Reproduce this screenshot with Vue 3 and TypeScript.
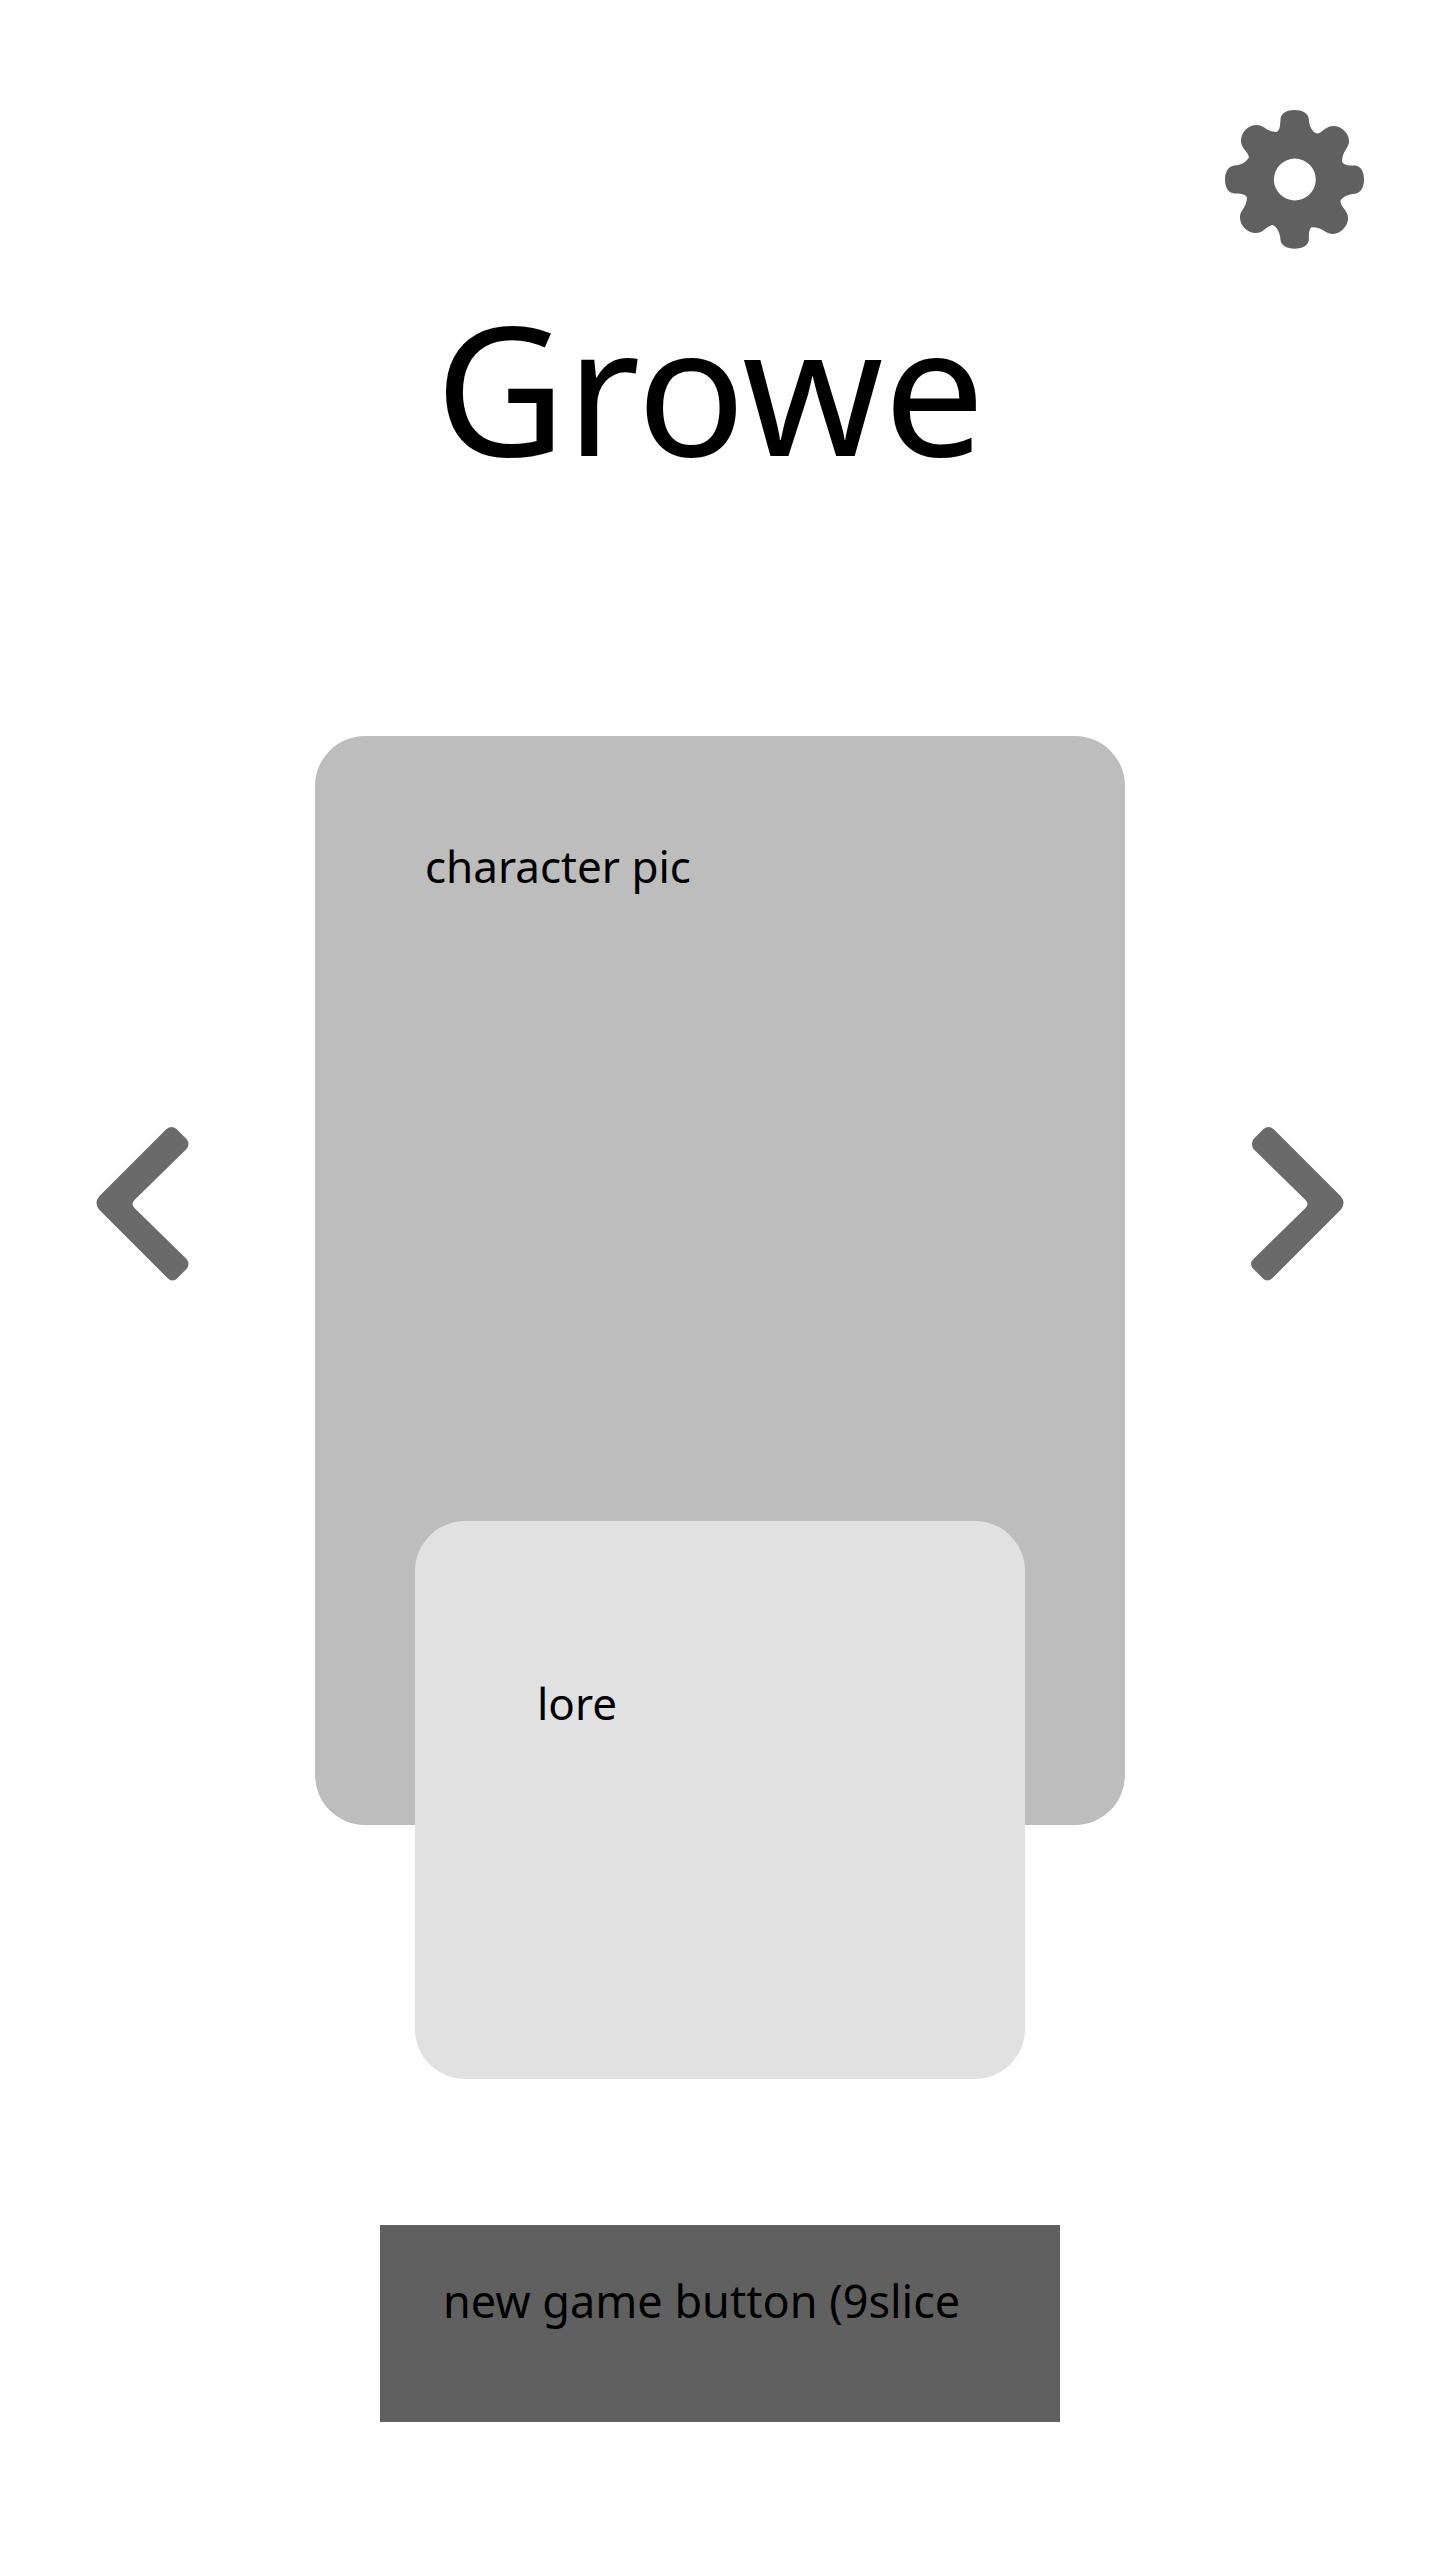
<script setup lang="ts">
import { ref } from 'vue'

interface Character {
  picture: string
  lore: string
}

const title = 'Growe'
const characters: Character[] = [{ picture: 'character pic', lore: 'lore' }]
const current = ref(0)

function step(delta: number): void {
  current.value = (current.value + delta + characters.length) % characters.length
}
</script>

<template>
  <main class="screen">
    <header class="top">
      <button class="icon-button" type="button" aria-label="Settings">
        <svg class="gear" viewBox="45 45 418 418" aria-hidden="true">
          <path
            fill-rule="evenodd"
            d="M212 72C214 54 232 45 254 45C277 45 295 54 297 72C298 94 308 111 321 116C336 116 346 93 371 93C396 93 418 115 418 139C418 160 397 168 397 201C406 213 421 211 437 212C454 214 463 232 463 254C463 277 453 295 436 297C415 298 398 307 392 318C393 339 415 346 415 370C415 396 392 418 367 418C345 417 338 396 304 398C296 407 298 421 297 436C295 453 277 462 254 462C232 462 214 453 212 436C211 415 201 396 188 391C168 393 161 415 138 415C112 415 90 393 90 367C90 347 111 339 111 307C104 296 88 297 73 296C55 295 45 277 45 254C45 232 55 214 73 212C93 211 111 200 117 187C115 170 93 160 93 138C93 112 114 90 140 90C163 90 167 110 201 111C211 104 211 88 212 72ZM255 191A63 63 0 1 0 255 317A63 63 0 1 0 255 191Z"
          />
        </svg>
      </button>
    </header>

    <h1 class="title">{{ title }}</h1>

    <section class="picker" aria-label="Character">
      <button class="icon-button arrow" type="button" aria-label="Previous character" @click="step(-1)">
        <svg class="chevron" viewBox="0 0 92 154" aria-hidden="true">
          <path d="M70 2Q75 -2 80 2L90 12Q94 17 90 22L38 73Q34 77 38 81L90 132Q94 137 90 142L81 151Q76 156 71 151L3 83Q-3 76 3 69Z" />
        </svg>
      </button>

      <div class="stack">
        <article class="card picture">{{ characters[current].picture }}</article>
        <article class="card lore">{{ characters[current].lore }}</article>
      </div>

      <button class="icon-button arrow" type="button" aria-label="Next character" @click="step(1)">
        <svg class="chevron" viewBox="0 0 92 154" aria-hidden="true">
          <path d="M22 2Q17 -2 12 2L2 12Q-1 17 2 22L54 73Q58 77 54 81L2 132Q-3 137 2 142L11 151Q16 156 21 151L89 83Q95 76 89 69Z" />
        </svg>
      </button>
    </section>

    <button class="new-game" type="button">new game button (9slice</button>
  </main>
</template>

<style>
body {
  margin: 0;
  background: #fefefe;
}
</style>

<style scoped>
.screen {
  box-sizing: border-box;
  display: flex;
  flex-direction: column;
  min-height: 100vh;
  padding: 110px 0 66px;
  color: #000;
  background: #fefefe;
  font-family: "Noto Sans", "Open Sans", sans-serif;
  font-size: 44px;
  line-height: 60px;
}

.top {
  display: flex;
  justify-content: flex-end;
  padding: 0 76px;
}

.icon-button {
  display: block;
  flex: none;
  padding: 0;
  border: 0;
  background: none;
  cursor: pointer;
}

.gear {
  display: block;
  width: 139px;
  height: 139px;
  fill: #606060;
}

.title {
  margin: 18px 0 0;
  padding-right: 20px;
  font-size: 180px;
  font-weight: 400;
  line-height: 240px;
  text-align: center;
}

.picker {
  display: flex;
  align-items: flex-start;
  justify-content: space-between;
  margin-top: 229px;
  padding: 0 96px;
}

.arrow {
  margin-top: 391px;
}

.chevron {
  display: block;
  width: 93px;
  height: 154px;
  fill: #6a6a6a;
}

.stack {
  display: flex;
  flex: 0 1 810px;
  flex-direction: column;
}

.card {
  box-sizing: border-box;
  border-radius: 50px;
}

.picture {
  min-height: 1089px;
  padding: 100px 110px;
  background: #bdbdbd;
}

.lore {
  z-index: 1;
  min-height: 558px;
  margin: -304px 100px 0;
  padding: 152px 122px;
  background: #e1e1e1;
}

.new-game {
  display: flex;
  box-sizing: border-box;
  width: 680px;
  max-width: 100%;
  min-height: 197px;
  align-items: flex-start;
  align-self: center;
  margin-top: 146px;
  padding: 46px 63px;
  border: 0;
  color: #000;
  background: #606060;
  font: inherit;
  font-size: 45px;
  text-align: left;
  white-space: nowrap;
  cursor: pointer;
}
</style>
